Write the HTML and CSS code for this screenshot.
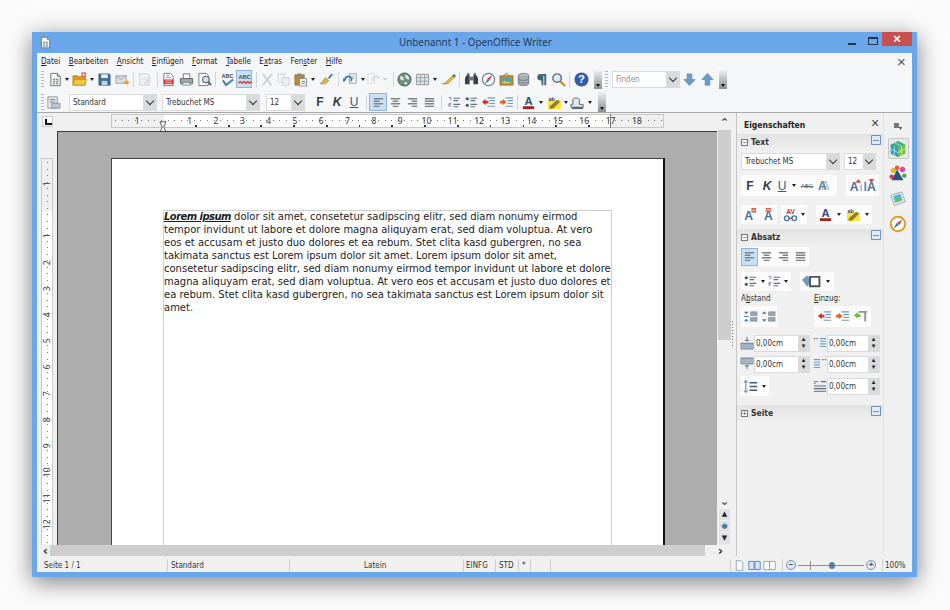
FILE: index.html
```html
<!DOCTYPE html>
<html lang="de">
<head>
<meta charset="utf-8">
<title>Unbenannt 1 - OpenOffice Writer</title>
<link rel="stylesheet" href="styles.css">
</head>
<body>
<svg class="defs" width="0" height="0">
  <symbol id="new" viewBox="0 0 16 16"><path d="M3 1.500h7l3 3v10H3z" fill="#fff" stroke="#6d6d6d"/><path d="M10 1.500v3h3" fill="#ddd" stroke="#6d6d6d"/><path d="M5 7h6v6H5z" fill="#7f93a5"/><path d="M5 9h6M5 11h6M8 7v6" stroke="#fff" stroke-width=".7"/></symbol>
  <symbol id="open" viewBox="0 0 16 16"><path d="M1 4h5l1 1h7v9H1z" fill="#d99a1d" stroke="#a8720f" stroke-width=".7"/><path d="M2.500 8h13l-2 6H1z" fill="#f6c544" stroke="#b98212" stroke-width=".6"/><path d="M10 0.500h5v5h-5z" fill="#e0503a"/><path d="M12.500 1v4M10.500 3h4" stroke="#fff" stroke-width=".8"/></symbol>
  <symbol id="save" viewBox="0 0 16 16"><path d="M2 2h11l1 1v11H2z" fill="#3d6f9c" stroke="#2a5075" stroke-width=".7"/><path d="M4.500 2.500h7v4h-7z" fill="#e9eef3"/><path d="M5 9.500h6V14H5z" fill="#c5d3df"/></symbol>
  <symbol id="mail" viewBox="0 0 16 16"><path d="M1 4h11v8H1z" fill="#dbe0e5" stroke="#8a929a" stroke-width=".8"/><path d="M1 4l5.500 4L12 4" fill="none" stroke="#8a929a" stroke-width=".8"/><path d="M9 10.500h3V8.500l3.500 2.800-3.500 2.700v-2H9z" fill="#e9962b"/></symbol>
  <symbol id="edit" viewBox="0 0 16 16"><path d="M3 2h8l2 2v10H3z" fill="#f6f6f6" stroke="#c4c8cc"/><path d="M5 6h6M5 8h5M5 10h4" stroke="#d5d8db"/><path d="M8 11l5-6 2 1.500-5 6-2.500 1z" fill="#d8dade"/></symbol>
  <symbol id="pdf" viewBox="0 0 16 16"><path d="M3 1.500h7l3 3v10H3z" fill="#fff" stroke="#777"/><path d="M3 8h10v5H3z" fill="#c9302c"/><path d="M4.500 9.500h7M4.500 11.500h7" stroke="#f3b4b1"/><path d="M5 4h4M5 6h6" stroke="#999"/></symbol>
  <symbol id="print" viewBox="0 0 16 16"><path d="M4.500 2h7v5h-7z" fill="#fff" stroke="#68707a"/><path d="M1.500 7h13v5.500h-13z" fill="#a2a8ae" stroke="#5f666d"/><path d="M4 11h8v3H4z" fill="#e8eaec" stroke="#5f666d" stroke-width=".7"/></symbol>
  <symbol id="preview" viewBox="0 0 16 16"><path d="M2 1.500h8l2 2v11H2z" fill="#fff" stroke="#777"/><circle cx="9.500" cy="8" r="3.500" fill="#cfe3f2" stroke="#59626b" stroke-width="1.200"/><path d="M12 10.500l3 3.500" stroke="#59626b" stroke-width="2"/></symbol>
  <symbol id="cut" viewBox="0 0 16 16"><path d="M3 2l9 12M13 2L3 14" stroke="#cfd2d5" stroke-width="2"/></symbol>
  <symbol id="copy" viewBox="0 0 16 16"><path d="M2 2h7v9H2z" fill="#f2f2f2" stroke="#d0d3d6"/><path d="M7 6h7v8H7z" fill="#eceff1" stroke="#cdd0d3"/></symbol>
  <symbol id="paste" viewBox="0 0 16 16"><path d="M2 3h10v11H2z" fill="#b98b3a" stroke="#8a6523" stroke-width=".7"/><path d="M5 1.500h4v3H5z" fill="#7d8a96"/><path d="M7 7h7.500v8H7z" fill="#fff" stroke="#68727c" stroke-width=".8"/><path d="M9 10h4M9 12h4" stroke="#4d7da8"/></symbol>
  <symbol id="brush" viewBox="0 0 16 16"><path d="M9.500 6l4-4.500 1.500 1.500-4 4.500z" fill="#4a7eb0"/><path d="M1 12c3 0 3-4 6-6l3.500 3c-2 3-6 5-9.500 3z" fill="#d9b45a" stroke="#8f7631" stroke-width=".6"/></symbol>
  <symbol id="undo" viewBox="0 0 16 16"><path d="M7 2h7v10H7z" fill="#fff" stroke="#8a98a5"/><path d="M9 5h3M9 7h3" stroke="#8a98a5"/><path d="M2 7c2-3 6-3 7 0v3" fill="none" stroke="#3f78ad" stroke-width="1.800"/><path d="M6 8l3 4 3-4" fill="#3f78ad" transform="translate(-8 -1)"/></symbol>
  <symbol id="redo" viewBox="0 0 16 16"><path d="M2 2h7v10H2z" fill="#f7f7f7" stroke="#d7dade"/><path d="M14 7c-2-3-6-3-7 0v3" fill="none" stroke="#d4d7da" stroke-width="1.800"/></symbol>
  <symbol id="globe" viewBox="0 0 16 16"><circle cx="8" cy="8" r="7" fill="#6e8f7a" stroke="#46604f"/><path d="M3 5c2-1 3 0 4 1s0 3-1 3-3-1-3-4zM9 3c2 0 4 2 4 4s-2 1-3 0-2-3-1-4zM8 11c2-1 3 0 3 1s-2 2-3 1z" fill="#dfe6df"/></symbol>
  <symbol id="table" viewBox="0 0 16 16"><path d="M1.500 2.500h13v11h-13z" fill="#dfe4e8" stroke="#8d969e"/><path d="M1.500 6h13M1.500 9.800h13M5.800 2.500v11M10.200 2.500v11" stroke="#8d969e" stroke-width=".8"/></symbol>
  <symbol id="draw" viewBox="0 0 16 16"><path d="M1 12c3 2 5-1 7-2" fill="none" stroke="#c79a2a" stroke-width="1.500"/><path d="M6 10l7-7 2 2-7 7-3 1z" fill="#e7b94b" stroke="#8a6a1c" stroke-width=".5"/><path d="M12 4l2-2 2 2-2 2z" fill="#4a7eb0"/></symbol>
  <symbol id="find" viewBox="0 0 16 16"><path d="M1 7l2-4h3v10H1zM15 7l-2-4h-3v10h5z" fill="#3a3f45"/><path d="M6 5h4v4H6z" fill="#6d7379"/><path d="M3.500 1h2v3h-2zM10.500 1h2v3h-2z" fill="#5d6369"/></symbol>
  <symbol id="nav" viewBox="0 0 16 16"><circle cx="8" cy="8" r="6.500" fill="#f4f6f7" stroke="#6f7f8e" stroke-width="1.300"/><path d="M12 3L7 7l2 2z" fill="#d23b3b"/><path d="M4 13l5-4-2-2z" fill="#4a7eb0"/></symbol>
  <symbol id="gallery" viewBox="0 0 16 16"><path d="M1 4h14v10H1z" fill="#c58a3a" stroke="#8b5f20" stroke-width=".7"/><path d="M5 4l3-3 3 3" fill="none" stroke="#8b5f20"/><path d="M3 6h10v6H3z" fill="#4fa3a5"/><path d="M3 12l3-3 2 2 2-1 3 2z" fill="#e8d35c"/></symbol>
  <symbol id="db" viewBox="0 0 16 16"><ellipse cx="8" cy="3.500" rx="5.500" ry="2" fill="#c4c9ce" stroke="#737b83"/><path d="M2.500 3.500v9c0 2.600 11 2.600 11 0v-9" fill="#a7aeb5" stroke="#737b83"/><path d="M2.500 7c0 2.600 11 2.600 11 0M2.500 10c0 2.600 11 2.600 11 0" fill="none" stroke="#737b83"/></symbol>
  <symbol id="para" viewBox="0 0 16 16"><path d="M13 2H7a3.500 3.500 0 0 0 0 7h1v5h2V4h1v10h2z" fill="#49607a"/></symbol>
  <symbol id="zoom" viewBox="0 0 16 16"><circle cx="6.500" cy="6.500" r="4.500" fill="#dde9f2" stroke="#596b7c" stroke-width="1.500"/><path d="M10 10l5 5" stroke="#c18d2a" stroke-width="2.400"/></symbol>
  <symbol id="down" viewBox="0 0 16 16"><path d="M5.500 2h5v6h3.500L8 14.500 2 8h3.500z" fill="#6f9bc4" stroke="#4f7aa3" stroke-width=".6"/></symbol>
  <symbol id="up" viewBox="0 0 16 16"><path d="M5.500 14h5V8h3.500L8 1.500 2 8h3.500z" fill="#6f9bc4" stroke="#4f7aa3" stroke-width=".6"/></symbol>
  <symbol id="styles" viewBox="0 0 16 16"><path d="M2 2h10v12H2z" fill="#e8ebee" stroke="#8a939b"/><path d="M4 5h6M4 7.500h6" stroke="#6f7981"/><path d="M6 9h9v5H6z" fill="#b7c5d2" stroke="#7c8b98" stroke-width=".7"/></symbol>
  <symbol id="al" viewBox="0 0 16 16"><path d="M3 4h10M3 6.700h6M3 9.400h10M3 12.100h6" class="ln"/></symbol>
  <symbol id="ac" viewBox="0 0 16 16"><path d="M3 4h10M5 6.700h6M3 9.400h10M5 12.100h6" class="ln"/></symbol>
  <symbol id="ar" viewBox="0 0 16 16"><path d="M3 4h10M7 6.700h6M3 9.400h10M7 12.100h6" class="ln"/></symbol>
  <symbol id="aj" viewBox="0 0 16 16"><path d="M3 4h10M3 6.700h10M3 9.400h10M3 12.100h10" class="ln"/></symbol>
  <symbol id="num" viewBox="0 0 16 16"><path d="M2 2.500h2v3M2 9h2v1H2v2h2" fill="none" stroke="#5e7f9f" stroke-width=".9"/><path d="M7 3.500h7M7 6h5M7 10h7M7 12.500h5" class="ln2"/></symbol>
  <symbol id="bul" viewBox="0 0 16 16"><circle cx="3.500" cy="4" r="1.700" fill="#3f5a75"/><circle cx="3.500" cy="11" r="1.700" fill="#3f5a75"/><path d="M7 3.500h7M7 6h5M7 10h7M7 12.500h5" class="ln2"/></symbol>
  <symbol id="indm" viewBox="0 0 16 16"><path d="M7 3h8M9 6h6M9 9h6M7 12h8" class="ln3"/><path d="M1 7.500l4-3.500v2h3v3H5v2z" fill="#c9372c"/></symbol>
  <symbol id="indp" viewBox="0 0 16 16"><path d="M7 3h8M9 6h6M9 9h6M7 12h8" class="ln3"/><path d="M8 7.500l-4-3.500v2H1v3h3v2z" fill="#d9662c"/></symbol>
  <symbol id="indg" viewBox="0 0 16 16"><path d="M6 3h9M13 3v10" stroke="#8b96a0" stroke-width="2" fill="none"/><path d="M1 6.500l4-3v2h3v3H5v2z" fill="#6eb83c"/></symbol>
  <symbol id="bg" viewBox="0 0 16 16"><path d="M3 10V5c0-2 6-3 7 0v5h4v3H1v-3z" fill="#e3e8ec" stroke="#58636d"/><path d="M2 13h12v2H2z" fill="#58636d"/></symbol>
  <symbol id="fill" viewBox="0 0 20 16"><path d="M1 6l5-4 5 5-5 6z" fill="#6f9bc4" stroke="#4f7aa3" stroke-width=".6"/><path d="M9 3h10v10H9z" fill="#fff" stroke="#4a5560" stroke-width="2"/></symbol>
  <symbol id="pinc" viewBox="0 0 16 16"><path d="M1 3l2.500 2.500L6 3z M1 13l2.500-2.500L6 13z" fill="#3f78ad"/><path d="M8 3h7v4H8zM8 9h7v4H8z" fill="#9ba8b4" stroke="#6d7b88" stroke-width=".6"/><path d="M1 8h5" stroke="#3f78ad"/></symbol>
  <symbol id="pdec" viewBox="0 0 16 16"><path d="M1 5l2.500-2.500L6 5z M1 11l2.500 2.500L6 11z" fill="#3f78ad"/><path d="M8 3h7v4H8zM8 9h7v4H8z" fill="#9ba8b4" stroke="#6d7b88" stroke-width=".6"/></symbol>
  <symbol id="sabove" viewBox="0 0 16 16"><path d="M8 1v5M5.500 5h5" stroke="#59636d"/><path d="M1 8h14v7H1z" fill="#8fa2b3" stroke="#627382" stroke-width=".6"/><path d="M1 10.500h14M1 13h14" stroke="#dbe2e8" stroke-width=".7"/></symbol>
  <symbol id="sbelow" viewBox="0 0 16 16"><path d="M1 1h14v7H1z" fill="#8fa2b3" stroke="#627382" stroke-width=".6"/><path d="M1 3.500h14M1 6h14" stroke="#dbe2e8" stroke-width=".7"/><path d="M8 9v5M5.500 10h5" stroke="#59636d"/></symbol>
  <symbol id="ibefore" viewBox="0 0 16 16"><path d="M8 3h7M8 6h7M8 9h7M8 12h7" class="ln3"/><path d="M1 3h1.500M4 3h1.500" stroke="#59636d" stroke-width="1.500"/></symbol>
  <symbol id="iafter" viewBox="0 0 16 16"><path d="M1 3h7M1 6h7M1 9h7M1 12h7" class="ln3"/><path d="M10.500 3H12M13.500 3H15" stroke="#59636d" stroke-width="1.500"/></symbol>
  <symbol id="lsp" viewBox="0 0 16 16"><path d="M3 2v12M1 4l2-2.500L5 4M1 12l2 2.500L5 12" fill="none" stroke="#3f78ad"/><path d="M7 4h8M7 8h8M7 12h8" stroke="#445a70" stroke-width="1.800"/></symbol>
  <symbol id="lgap" viewBox="0 0 16 16"><path d="M1 3h5M1 5h2" stroke="#59636d"/><path d="M9 3h6M1 8h14M1 11h14M1 14h14" stroke="#546b80" stroke-width="1.400"/></symbol>
  <symbol id="more" viewBox="0 0 10 10"><path d="M.5.500h9v9h-9z" fill="#dfe9f4" stroke="#6e93b8"/><path d="M2 5.500h6" stroke="#6e93b8"/></symbol>
  <symbol id="cube" viewBox="0 0 20 20"><path d="M2 5l8-4 8 4v10l-8 4-8-4z" fill="#3bb27c"/><path d="M2 5l8 4v10l-8-4z" fill="#2a9fc9"/><path d="M10 9l8-4v10l-8 4z" fill="#7ac143"/><path d="M6 3l8 4M2 10l8 4 8-4M6 7v10M14 7v10" stroke="#e9f5f0" stroke-width=".7" fill="none"/></symbol>
  <symbol id="tstyle" viewBox="0 0 20 20"><path d="M3 17L9 5l7 12z" fill="#2d4f86"/><circle cx="5" cy="6" r="3" fill="#e9b32c"/><circle cx="15" cy="5" r="3" fill="#d44ba0"/><circle cx="9" cy="3" r="2.500" fill="#e55b33"/><circle cx="17" cy="12" r="2.500" fill="#4bb043"/><circle cx="3" cy="13" r="2.500" fill="#d9364a"/></symbol>
  <symbol id="tgal" viewBox="0 0 20 20"><path d="M2 6l12-4 4 11-12 4z" fill="#f1f5f7" stroke="#8ea0ad"/><path d="M4.500 7l8-2.800 2.700 7.300-8 2.800z" fill="#55b4d6"/><path d="M6 13l3-5 2 3 2-2 2 2-8 3z" fill="#6dbb48"/></symbol>
  <symbol id="tnav" viewBox="0 0 20 20"><circle cx="10" cy="10" r="8" fill="#fff" stroke="#e29a24" stroke-width="2.200"/><path d="M15 5l-6 3.500 2.500 2.500z" fill="#d23b3b"/><path d="M5 15l6-4-2.500-2.500z" fill="#3f78ad"/></symbol>
  <symbol id="menuico" viewBox="0 0 10 10"><path d="M1 2h5v5H1z" fill="#777"/><path d="M6 6h3L7.500 9z" fill="#444"/></symbol>
  <symbol id="single" viewBox="0 0 16 16"><path d="M4 2h6l2 2v10H4z" fill="#fff" stroke="#8b97a3"/></symbol>
  <symbol id="dbl" viewBox="0 0 16 16"><path d="M1 3h6.500v10H1zM8.500 3H15v10H8.500z" fill="#dbe7f3" stroke="#3f78ad"/></symbol>
  <symbol id="book" viewBox="0 0 16 16"><path d="M1 3h7v10H1zM8 3h7v10H8z" fill="#fff" stroke="#8b97a3"/></symbol>
</svg>

<div class="win">
  <header class="title">
    <svg class="appico"><use href="#new"/></svg>
    <span class="title-text">Unbenannt 1 - OpenOffice Writer</span>
    <span class="wbtn min"></span>
    <span class="wbtn max"></span>
    <span class="wbtn close">×</span>
  </header>

  <nav class="menu">
    <span><u>D</u>atei</span><span><u>B</u>earbeiten</span><span><u>A</u>nsicht</span><span><u>E</u>infügen</span><span><u>F</u>ormat</span><span><u>T</u>abelle</span><span>E<u>x</u>tras</span><span>Fen<u>s</u>ter</span><span><u>H</u>ilfe</span>
    <span class="menu-x">×</span>
  </nav>

  <div class="tb t1">
    <i class="grip"></i>
    <b class="c w18"><svg><use href="#new"/></svg></b><b class="c w6 dd"></b>
    <b class="c w18"><svg><use href="#open"/></svg></b><b class="c w8 dd"></b>
    <b class="c w16"><svg><use href="#save"/></svg></b>
    <b class="c w20"><svg><use href="#mail"/></svg></b>
    <b class="c w2 sep"></b>
    <b class="c w20"><svg><use href="#edit"/></svg></b>
    <b class="c w6 sep"></b>
    <b class="c w16"><svg><use href="#pdf"/></svg></b>
    <b class="c w20"><svg><use href="#print"/></svg></b>
    <b class="c w16"><svg><use href="#preview"/></svg></b>
    <b class="c w6 sep"></b>
    <b class="c w18"><svg viewBox="0 0 16 16"><text x="8" y="6.500" class="tiny">ABC</text><path d="M3 9l3.500 5L14 8" fill="none" stroke="#4a7eb0" stroke-width="2.200"/></svg></b>
    <b class="c w16 on"><svg viewBox="0 0 16 16"><text x="8" y="7.500" class="tiny">ABC</text><path d="M1.500 12l2-2 2 2 2-2 2 2 2-2 2 2 2-2" fill="none" stroke="#d23b3b" stroke-width="1.400"/></svg></b>
    <b class="c w8 sep"></b>
    <b class="c w14"><svg><use href="#cut"/></svg></b>
    <b class="c w18"><svg><use href="#copy"/></svg></b>
    <b class="c w16"><svg><use href="#paste"/></svg></b><b class="c w10 dd"></b>
    <b class="c w16"><svg><use href="#brush"/></svg></b>
    <b class="c w8 sep"></b>
    <b class="c w16"><svg><use href="#undo"/></svg></b><b class="c w10 dd"></b>
    <b class="c w10"><svg><use href="#redo"/></svg></b><b class="c w14 dd off"></b>
    <b class="c w2 sep"></b>
    <b class="c w20"><svg><use href="#globe"/></svg></b>
    <b class="c w16"><svg><use href="#table"/></svg></b><b class="c w10 dd"></b>
    <b class="c w16"><svg><use href="#draw"/></svg></b>
    <b class="c w6 sep"></b>
    <b class="c w18"><svg><use href="#find"/></svg></b>
    <b class="c w16"><svg><use href="#nav"/></svg></b>
    <b class="c w20"><svg><use href="#gallery"/></svg></b>
    <b class="c w14"><svg><use href="#db"/></svg></b>
    <b class="c w22"><svg><use href="#para"/></svg></b>
    <b class="c w12"><svg><use href="#zoom"/></svg></b>
    <b class="c w10 sep"></b>
    <b class="c w14"><svg viewBox="0 0 16 16"><circle cx="8" cy="8" r="7.500" fill="#2f5da6"/><text x="8" y="12" class="q">?</text></svg></b>
    <i class="handle h-a"></i>
    <i class="grip g-b"></i>
    <span class="combo finden"><span class="combo-val">Finden</span><span class="combo-btn"></span></span>
    <b class="c w18"><svg><use href="#down"/></svg></b>
    <b class="c w18"><svg><use href="#up"/></svg></b>
    <i class="handle h-b"></i>
  </div>

  <div class="tb t2">
    <i class="grip"></i>
    <b class="c w14"><svg><use href="#styles"/></svg></b>
    <span class="combo c-style"><span class="combo-val">Standard</span><span class="combo-btn"></span></span>
    <span class="combo c-font"><span class="combo-val">Trebuchet MS</span><span class="combo-btn"></span></span>
    <span class="combo c-size"><span class="combo-val">12</span><span class="combo-btn"></span></span>
    <b class="c w18 fmt m-f">F</b>
    <b class="c w16 fmt it">K</b>
    <b class="c w18 fmt ul">U</b>
    <b class="c w6 sep"></b>
    <b class="c w18 on"><svg><use href="#al"/></svg></b>
    <b class="c w16"><svg><use href="#ac"/></svg></b>
    <b class="c w18"><svg><use href="#ar"/></svg></b>
    <b class="c w16"><svg><use href="#aj"/></svg></b>
    <b class="c w8 sep"></b>
    <b class="c w18"><svg><use href="#num"/></svg></b>
    <b class="c w16"><svg><use href="#bul"/></svg></b>
    <b class="c w18"><svg><use href="#indm"/></svg></b>
    <b class="c w18"><svg><use href="#indp"/></svg></b>
    <b class="c w4 sep"></b>
    <b class="c w18"><svg viewBox="0 0 16 16"><text x="8" y="11" class="fa">A</text><path d="M2 12h12v3H2z" fill="#a5221d"/></svg></b><b class="c w8 dd"></b>
    <b class="c w18"><svg viewBox="0 0 16 16"><path d="M1 6h14v9H1z" fill="#f5e83c"/><path d="M3 12l8-7 3 2-7 7-4 1z" fill="#9a7a2b"/><text x="5" y="6" class="tiny2">ab</text></svg></b><b class="c w6 dd"></b>
    <b class="c w16"><svg><use href="#bg"/></svg></b><b class="c w10 dd"></b>
    <i class="handle h-c"></i>
  </div>

  <main class="work">
    <section class="editor">
      <div class="corner"><span class="lbtn"></span></div>
      <div class="hruler">
        <div class="hr-track">
          <span class="hr-cell">1</span><span class="hr-cell"><svg class="hg" viewBox="0 0 10 16"><path d="M1 1h8L6 8l3 7H1l3-7z" fill="#fff" stroke="#555" stroke-width="1.300"/></svg></span><span class="hr-cell">1</span><span class="hr-cell">2</span><span class="hr-cell">3</span><span class="hr-cell">4</span><span class="hr-cell">5</span><span class="hr-cell">6</span><span class="hr-cell">7</span><span class="hr-cell">8</span><span class="hr-cell">9</span><span class="hr-cell">10</span><span class="hr-cell">11</span><span class="hr-cell">12</span><span class="hr-cell">13</span><span class="hr-cell">14</span><span class="hr-cell">15</span><span class="hr-cell">16</span><span class="hr-cell rm">17</span><span class="hr-cell">18</span>
        </div>
      </div>
      <div class="vscroll">
        <span class="arr">⌃</span>
        <span class="vthumb"></span>
        <span class="vtrack"></span>
        <span class="arr dn">⌄</span>
        <span class="navb">▲</span><span class="navb ball">●</span><span class="navb">▼</span>
      </div>
      <div class="vruler">
        <div class="vr-track">
          <span class="vr-cell">1</span><span class="vr-cell vr-blank"></span><span class="vr-cell">1</span><span class="vr-cell">2</span><span class="vr-cell">3</span><span class="vr-cell">4</span><span class="vr-cell">5</span><span class="vr-cell">6</span><span class="vr-cell">7</span><span class="vr-cell">8</span><span class="vr-cell">9</span><span class="vr-cell">10</span><span class="vr-cell">11</span><span class="vr-cell">12</span>
        </div>
      </div>
      <div class="doc">
        <div class="page">
          <div class="frame">
            <p><strong>Lorem ipsum</strong> dolor sit amet, consetetur sadipscing elitr, sed diam nonumy eirmod<br>tempor invidunt ut labore et dolore magna aliquyam erat, sed diam voluptua. At vero<br>eos et accusam et justo duo dolores et ea rebum. Stet clita kasd gubergren, no sea<br>takimata sanctus est Lorem ipsum dolor sit amet. Lorem ipsum dolor sit amet,<br>consetetur sadipscing elitr, sed diam nonumy eirmod tempor invidunt ut labore et dolore<br>magna aliquyam erat, sed diam voluptua. At vero eos et accusam et justo duo dolores et<br>ea rebum. Stet clita kasd gubergren, no sea takimata sanctus est Lorem ipsum dolor sit<br>amet.</p>
          </div>
        </div>
      </div>
      <div class="hscroll"><span class="harr">‹</span><span class="hthumb"></span><span class="harr r">›</span></div>
    </section>

    <div class="split"><i></i></div>

    <aside class="deck">
      <div class="deck-title"><span>Eigenschaften</span><span class="deck-x">×</span></div>

      <div class="ph"><i class="exp">−</i><span>Text</span><svg class="more"><use href="#more"/></svg></div>
      <div class="row r-font">
        <span class="combo c-sfont"><span class="combo-val">Trebuchet MS</span><span class="combo-btn"></span></span>
        <span class="combo c-ssize"><span class="combo-val">12</span><span class="combo-btn"></span></span>
      </div>
      <div class="row r-a">
        <span class="grp g1">
          <b class="c w18 fmt">F</b><b class="c w16 fmt it">K</b><b class="c w14 fmt ul">U</b><b class="c w10 dd"></b>
          <b class="c w16 strike">ABC</b><b class="c w18 fmt shadow">A</b>
        </span>
        <span class="grp g2">
          <b class="c w16"><svg viewBox="0 0 16 16"><text x="6.500" y="14" class="fb">A</text><path d="M8 5h6l-3-4z" fill="#d04c3a"/><path d="M14 7v7" stroke="#6f8aa6"/></svg></b>
          <b class="c w14"><svg viewBox="0 0 16 16"><text x="9" y="14" class="fb">A</text><path d="M6 1h6L9 5z" fill="#d04c3a"/><path d="M2.500 4v10" stroke="#6f8aa6" stroke-width="2"/></svg></b>
        </span>
      </div>
      <div class="row r-b">
        <span class="grp">
          <b class="c w18"><svg viewBox="0 0 16 16"><text x="6" y="14" class="fb">A</text><path d="M9 1h5v5H9z" fill="#d4604e"/><path d="M10 3.500h3" stroke="#fff"/></svg></b>
          <b class="c w18"><svg viewBox="0 0 16 16"><text x="8" y="14" class="fb">A</text><path d="M5 1h6v4H5z" fill="#d4604e"/><path d="M6 3h4" stroke="#fff"/></svg></b>
        </span>
        <span class="grp g3"><b class="c w18"><svg viewBox="0 0 16 16"><text x="8" y="7" class="tiny3">AV</text><circle cx="4" cy="12" r="2.500" fill="none" stroke="#3f78ad" stroke-width="1.500"/><circle cx="12" cy="12" r="2.500" fill="none" stroke="#3f78ad" stroke-width="1.500"/><path d="M6 12h4" stroke="#d23b3b" stroke-width="1.500"/></svg></b><b class="c w8 dd"></b></span>
        <span class="grp g4"><b class="c w18"><svg viewBox="0 0 16 16"><text x="8" y="11" class="fa">A</text><path d="M2 12h12v3H2z" fill="#a5221d"/></svg></b><b class="c w10 dd"></b></span>
        <span class="grp"><b class="c w18"><svg viewBox="0 0 16 16"><path d="M1 6h14v9H1z" fill="#f5e83c"/><path d="M3 12l8-7 3 2-7 7-4 1z" fill="#9a7a2b"/><text x="5" y="6" class="tiny2">ab</text></svg></b><b class="c w10 dd"></b></span>
      </div>

      <div class="ph ph2"><i class="exp">−</i><span>Absatz</span><svg class="more"><use href="#more"/></svg></div>
      <div class="row r-c">
        <span class="grp"><b class="c w17 on"><svg><use href="#al"/></svg></b><b class="c w17"><svg><use href="#ac"/></svg></b><b class="c w17"><svg><use href="#ar"/></svg></b><b class="c w17"><svg><use href="#aj"/></svg></b></span>
      </div>
      <div class="row r-d">
        <span class="grp"><b class="c w18"><svg><use href="#bul"/></svg></b><b class="c w8 dd"></b><b class="c w14"><svg><use href="#num"/></svg></b><b class="c w10 dd"></b></span>
        <span class="grp g5"><b class="c w22 wide"><svg><use href="#fill"/></svg></b><b class="c w12 dd"></b></span>
      </div>
      <div class="row r-e"><span class="lbl l1">A<u>b</u>stand</span><span class="lbl"><u>E</u>inzug:</span></div>
      <div class="row r-f">
        <span class="grp"><b class="c w18"><svg><use href="#pinc"/></svg></b><b class="c w18"><svg><use href="#pdec"/></svg></b></span>
        <span class="grp g6"><b class="c w18"><svg><use href="#indm"/></svg></b><b class="c w18"><svg><use href="#indp"/></svg></b><b class="c w18"><svg><use href="#indg"/></svg></b></span>
      </div>
      <div class="row r-s">
        <svg class="sico"><use href="#sabove"/></svg><span class="spin s-a"><span class="spin-val">0,00cm</span><span class="spin-btn"><i>▴</i><i>▾</i></span></span>
        <svg class="sico si2"><use href="#ibefore"/></svg><span class="spin s-b"><span class="spin-val">0,00cm</span><span class="spin-btn"><i>▴</i><i>▾</i></span></span>
      </div>
      <div class="row r-s">
        <svg class="sico"><use href="#sbelow"/></svg><span class="spin s-a"><span class="spin-val">0,00cm</span><span class="spin-btn"><i>▴</i><i>▾</i></span></span>
        <svg class="sico si2"><use href="#iafter"/></svg><span class="spin s-b"><span class="spin-val">0,00cm</span><span class="spin-btn"><i>▴</i><i>▾</i></span></span>
      </div>
      <div class="row r-s r-l">
        <span class="grp g7"><b class="c w18"><svg><use href="#lsp"/></svg></b><b class="c w10 dd"></b></span>
        <svg class="sico si3"><use href="#lgap"/></svg><span class="spin s-b"><span class="spin-val">0,00cm</span><span class="spin-btn"><i>▴</i><i>▾</i></span></span>
      </div>

      <div class="ph ph3"><i class="exp">+</i><span>Seite</span><svg class="more"><use href="#more"/></svg></div>
    </aside>

    <div class="tabs">
      <svg class="tab-menu"><use href="#menuico"/></svg>
      <span class="tab active"><svg><use href="#cube"/></svg></span>
      <span class="tab"><svg><use href="#tstyle"/></svg></span>
      <span class="tab"><svg><use href="#tgal"/></svg></span>
      <span class="tab"><svg><use href="#tnav"/></svg></span>
    </div>
  </main>

  <footer class="status">
    <span class="st s1">Seite 1 / 1</span>
    <span class="st s2">Standard</span>
    <span class="st s3">Latein</span>
    <span class="st s4">EINFG</span>
    <span class="st s5">STD</span>
    <span class="st s6">*</span>
    <span class="st s7"></span>
    <span class="st s8"></span>
    <span class="st s9"><svg><use href="#single"/></svg><svg><use href="#dbl"/></svg><svg><use href="#book"/></svg></span>
    <span class="st s10"><i class="zbtn">−</i><span class="slider"><i class="mid"></i><i class="thumb"></i></span><i class="zbtn">+</i></span>
    <span class="st s11">100%</span>
  </footer>
</div>
</body>
</html>
```

FILE: styles.css
```css
* { box-sizing: border-box; }
html, body { margin: 0; height: 610px; overflow: hidden; }
body { background: #fbfbfb; font-family: "DejaVu Sans Condensed", "DejaVu Sans", sans-serif; font-stretch: condensed; color: #2b2b2b; }
.defs { position: absolute; }
i, b { font-style: normal; font-weight: normal; }

.tiny { font: bold 6px "Liberation Sans", sans-serif; text-anchor: middle; fill: #3a4a5a; }
.tiny2 { font: bold 6px "Liberation Sans", sans-serif; text-anchor: middle; fill: #444; }
.tiny3 { font: bold 7px "Liberation Sans", sans-serif; text-anchor: middle; fill: #b23a3a; }
.q { font: bold 12px "Liberation Sans", sans-serif; text-anchor: middle; fill: #fff; }
.fa { font: bold 12px "Liberation Sans", sans-serif; text-anchor: middle; fill: #2f4f74; }
.fb { font: bold 13px "Liberation Sans", sans-serif; text-anchor: middle; fill: #4f6e8e; }
.ln { stroke: #7c838a; stroke-width: 1.500; fill: none; }
.ln2 { stroke: #5d7184; stroke-width: 1.200; fill: none; }
.ln3 { stroke: #6f9bc4; stroke-width: 1.200; fill: none; }

.win {
  margin: 32px 33px 0 32px;
  width: 885px;
  height: 545px;
  border: 5px solid #6aa6ea;
  border-width: 0 5px 5px;
  background: #f0f0f0;
  box-shadow: 0 5px 22px rgba(0, 0, 0, .5);
  display: flex;
  flex-direction: column;
}

.title {
  height: 21px;
  margin: 0 -5px;
  padding-left: 7px;
  background: #6aa6ea;
  display: flex;
  align-items: center;
  position: relative;
}
.appico { width: 13px; height: 13px; }
.title-text {
  position: absolute;
  left: 367px;
  top: 3px;
  font: 9.850px/15px "Noto Sans", sans-serif;
  color: #1e3a5c;
}
.wbtn { position: absolute; top: 0; }
.min { left: 816px; top: 11px; width: 8px; height: 2px; background: #24364c; }
.max { left: 836px; top: 5px; width: 10px; height: 8px; border: 1px solid #24364c; border-top-width: 2px; }
.close { left: 850px; width: 30px; height: 14px; background: #c75050; color: #fff; font: bold 13px/14px "Liberation Sans", sans-serif; text-align: center; }

.menu {
  height: 17px;
  display: flex;
  align-items: center;
  gap: 8.500px;
  padding: 0 0 0 4px;
  background: #f5f6f7;
  font-size: 8px;
  color: #222;
  position: relative;
}
.menu-x { margin-left: auto; margin-right: 3px; font: 15px/15px "Liberation Sans", sans-serif; color: #555; width: 12px; }

.tb { display: flex; align-items: center; background: #f5f6f7; position: relative; }
.t1 { height: 22px; padding: 0 0 4px 4px; }
.t2 { height: 21px; padding-left: 4px; border-bottom: 1px solid #a9a9a9; }

.c { height: 18px; flex: none; display: flex; align-items: center; justify-content: center; position: relative; }
.c svg { width: 15px; height: 15px; flex: none; }
.c.wide svg { width: 20px; }
.w2 { width: 2px; } .w4 { width: 4px; } .w6 { width: 6px; } .w8 { width: 8px; } .w10 { width: 10px; }
.w12 { width: 12px; } .w14 { width: 14px; } .w16 { width: 16px; } .w17 { width: 17px; } .w18 { width: 18px; }
.w20 { width: 20px; } .w22 { width: 22px; }
.on { background: #c9dff3; box-shadow: inset 0 0 0 1px #8db4da; }
.sep::after { content: ""; width: 1px; height: 15px; background: #d2d4d6; }
.dd::after { content: ""; border: 2.500px solid transparent; border-top: 3px solid #222; border-bottom: 0; }
.dd.off::after { border-top-color: #c4c6c8; }
.grip { width: 3px; height: 16px; flex: none; margin-right: 2px; background: repeating-linear-gradient(#b4b6b8 0 1px, transparent 1px 3px); }
.handle {
  width: 8px; height: 19px; flex: none; position: relative;
  background: linear-gradient(#f0f1f2, #8c8e90);
}
.handle::after { content: ""; position: absolute; left: 2px; bottom: 2px; border: 2px solid transparent; border-top: 3px solid #111; border-bottom: 0; }
.h-a { margin-left: 6px; }
.g-b { margin-left: 3px; margin-right: 4px; }
.h-b { margin-left: 3px; }
.h-c { margin-left: 3px; height: 20px; }

.combo { display: flex; flex: none; height: 17px; background: #d9dadb; padding: 1px; font-size: 8px; color: #333; }
.combo-val { flex: 1; min-width: 0; background: #fff; padding-left: 3px; line-height: 15px; white-space: nowrap; }
.combo-btn { width: 13px; flex: none; display: flex; align-items: center; justify-content: center; }
.combo-btn::after { content: ""; width: 5px; height: 5px; margin-top: -3px; border: solid #333; border-width: 0 1.300px 1.300px 0; transform: rotate(45deg); }
.finden { width: 68px; }
.finden .combo-val { color: #8a8a8a; }
.c-style { width: 88px; margin-left: 9px; }
.c-font { width: 98px; margin-left: 5px; }
.c-size { width: 39px; margin-left: 6px; }
.m-f { margin-left: 6px; }
.fmt { font: bold 12px/18px "Liberation Sans", sans-serif; color: #2d3b4a; }
.it { font-style: italic; }
.ul { text-decoration: underline; font-weight: normal; color: #3a5778; }
.strike { font: 6px/18px "Liberation Sans", sans-serif; color: #5d6b78; text-decoration: line-through; }
.shadow { color: #5f7f9f; text-shadow: 3px 0 #b4c5d6; justify-content: flex-start; padding-left: 3px; }

.work { flex: 1; min-height: 0; display: flex; background: #f0f0f0; }
.editor {
  width: 694px;
  flex: none;
  display: grid;
  grid-template-columns: 20px 660px 14px;
  grid-template-rows: 18px 414px 10px;
}
.corner { padding: 3px 0 0 5px; }
.lbtn { display: block; width: 11px; height: 11px; background: #fff; border: 1px solid #c8c8c8; position: relative; }
.lbtn::after { content: ""; position: absolute; left: 2px; top: 2px; width: 5px; height: 4px; border: solid #111; border-width: 0 0 2px 2px; }

.hruler { padding: 1px 0 0 54px; background: #f0f0f0; overflow: hidden; }
.hr-track {
  width: 553px;
  height: 14px;
  border: 1px solid #c8c8c8;
  padding-left: 12px;
  display: flex;
  align-items: center;
  font: 8.500px/12px "Noto Sans", sans-serif;
  color: #333;
  background:
    repeating-linear-gradient(90deg, transparent 0 3px, #777 3px 4px, transparent 4px 6.575px) 0 5px / 100% 1px no-repeat,
    repeating-linear-gradient(90deg, transparent 0 31px, #333 31px 32.750px) 52px 10px / 450px 2px no-repeat,
    linear-gradient(90deg, #efefef 0 52px, #fff 52px 500px, #efefef 500px);
}
.hr-cell { width: 26.300px; flex: none; text-align: center; position: relative; }
.hg { position: absolute; left: 9px; top: 0; width: 8px; height: 12px; }
.rm::after { content: ""; position: absolute; left: 13px; top: -1px; width: 1px; height: 14px; background: #777; }

.vscroll { grid-row: 1 / span 2; grid-column: 3; display: flex; flex-direction: column; align-items: stretch; padding-left: 1px; }
.arr { height: 17px; flex: none; text-align: center; font: 12px/20px "DejaVu Sans", sans-serif; color: #444; }
.arr.dn { height: 10px; line-height: 4px; }
.vthumb { height: 210px; flex: none; background: #cdcdcd; }
.vtrack { flex: 1; }
.navb { height: 11px; flex: none; margin: 0 1px 1px; background: #dfe1e3; font: 7px/11px "DejaVu Sans", sans-serif; text-align: center; color: #222; }
.ball { color: #4f7aa3; }

.vruler { padding: 27px 0 0 4px; overflow: hidden; }
.vr-track {
  width: 12px;
  height: 400px;
  border: 1px solid #c8c8c8;
  border-bottom: 0;
  background:
    repeating-linear-gradient(transparent 0 3px, #777 3px 4px, transparent 4px 6.550px) 5px 0 / 1px 100% no-repeat,
    linear-gradient(#efefef 0 52px, #fff 52px);
  padding-top: 12px;
  display: flex;
  flex-direction: column;
  font: 8.500px/10px "Noto Sans", sans-serif;
  color: #333;
}
.vr-cell { height: 26.200px; flex: none; display: flex; align-items: center; justify-content: center; writing-mode: vertical-rl; transform: rotate(180deg); }

.doc { background: #adadad; border: solid #3a3a3a; border-width: 1px 0 0 1px; overflow: hidden; padding: 26px 0 0 53px; }
.page { width: 554px; height: 400px; background: #fff; border: solid #444; border-right: 2px solid #111; border-width: 1px 2px 0 1px; padding: 51px 0 0 51px; }
.frame { width: 449px; height: 400px; border: 1px solid #cfcfcf; border-bottom: 0; }
.frame p { margin: 0; font: 10px/12.950px "DejaVu Sans", sans-serif; font-stretch: normal; color: #1c1c1c; white-space: nowrap; }
.frame strong { font-weight: bold; font-style: italic; text-decoration: underline; letter-spacing: -.55px; }

.hscroll { grid-column: 1 / span 3; height: 11px; display: flex; background: #f0f0f0; align-items: center; padding-left: 4px; }
.harr { width: 9px; flex: none; font: bold 13px/11px "DejaVu Sans", sans-serif; color: #333; text-align: center; }
.hthumb { width: 655px; height: 11px; flex: none; background: #cdcdcd; }
.harr.r { margin-left: 11px; }

.split { width: 6px; flex: none; position: relative; border-right: 1px solid #c6c6c6; }
.split i { position: absolute; left: 1px; top: 208px; width: 1px; height: 26px; background: repeating-linear-gradient(#666 0 1px, transparent 1px 3px); }

.deck { width: 147px; flex: none; border-right: 1px solid #e2e2e2; display: flex; flex-direction: column; font-size: 8px; }
.deck-title { height: 21px; padding: 5px 0 0 7px; display: flex; font-weight: bold; font-size: 8.500px; line-height: 14px; color: #222; }
.deck-x { margin-left: auto; margin-right: 2px; font: 14px/10px "Liberation Sans", sans-serif; color: #444; width: 10px; }
.ph { height: 16px; display: flex; align-items: center; gap: 3px; padding-left: 4px; background: linear-gradient(#e2e2e2, #efefef); font-weight: bold; font-size: 8.500px; color: #333; flex: none; }
.exp { width: 7px; height: 7px; border: 1px solid #777; font: 7px/5px "Liberation Sans", sans-serif; text-align: center; background: #f6f6f6; }
.more { width: 10px; height: 10px; margin-left: auto; margin-right: 2px; margin-top: -4px; }
.row { display: flex; flex: none; align-items: flex-start; padding-left: 4px; }
.grp { display: inline-flex; align-items: center; background: #fbfbfb; flex: none; height: 100%; }
.r-font { margin-top: 3px; height: 17px; }
.c-sfont { width: 99px; }
.c-ssize { width: 32px; margin-left: 4px; }
.c-ssize .combo-btn { width: 12px; }
.r-a { margin-top: 5px; height: 21px; }
.g1 { width: 96px; padding-left: 0; }
.g2 { margin-left: 9px; width: 33px; padding-left: 1px; }
.r-b { margin-top: 9px; height: 19px; }
.g3 { margin-left: 4px; }
.g4 { margin-left: 9px; }
.ph2 { margin-top: 5px; }
.r-c { margin-top: 2px; height: 19px; }
.r-d { margin-top: 6px; height: 19px; }
.g5 { margin-left: 9px; }
.r-e { margin-top: 1px; height: 14px; line-height: 14px; color: #333; }
.lbl { width: 73px; flex: none; }
.r-f { height: 21px; margin-top: 0; }
.g6 { margin-left: 37px; width: 57px; padding-left: 1px; }
.r-s { margin-top: 8px; height: 16px; align-items: center; padding-left: 1px; }
.r-s + .r-s { margin-top: 5px; }
.r-s + .r-s.r-l { margin-top: 6px; padding-left: 4px; }
.sico { width: 14px; height: 14px; flex: none; margin-left: 2px; }
.si2 { margin-left: 3px; }
.si3 { margin-left: 44px; }
.g7 { height: 20px; }
.spin { display: flex; height: 17px; flex: none; background: #d9dadb; padding: 1px; color: #333; }
.spin-val { flex: 1; background: #fff; line-height: 15px; padding-left: 1px; }
.spin-btn { width: 11px; display: flex; flex-direction: column; }
.spin-btn i { flex: 1; font: 7px/7px "DejaVu Sans", sans-serif; text-align: center; color: #222; }
.s-a { width: 56px; }
.s-b { width: 53px; }
.ph3 { margin-top: 11px; }

.tabs { flex: 1; display: flex; flex-direction: column; align-items: center; padding-top: 8px; background: #f0f0f0; }
.tab-menu { width: 10px; height: 10px; flex: none; margin-bottom: 7px; }
.tab { width: 21px; height: 21px; display: flex; align-items: center; justify-content: center; margin-bottom: 4px; flex: none; }
.tab svg { width: 18px; height: 18px; }
.tab.active { background: #e8e8e8; border: 1px solid #c6c6c6; border-radius: 2px; }

.status { height: 16px; flex: none; display: flex; align-items: center; padding-top: 2px; font-size: 8px; color: #333; background: #f0f0f0; }
.st { height: 13px; line-height: 13px; flex: none; border-left: 1px solid #cfcfcf; padding-left: 3px; display: flex; align-items: center; }
.s1 { width: 130px; border: 0; padding-left: 7px; }
.s2 { width: 122px; }
.s3 { width: 174px; padding-left: 74px; }
.s4 { width: 32px; padding-left: 2px; }
.s5 { width: 23px; }
.s6 { width: 12px; }
.s7 { width: 20px; }
.s8 { width: 180px; }
.s9 { width: 52px; padding-left: 1px; }
.s9 svg { width: 15px; height: 13px; flex: none; }
.s10 { width: 100px; gap: 2px; padding-left: 3px; }
.zbtn { width: 10px; height: 10px; flex: none; border-radius: 50%; border: 1px solid #7d93a8; background: #dfe8f0; font: bold 8px/8px "Liberation Sans", sans-serif; text-align: center; color: #446; }
.slider { width: 66px; height: 9px; flex: none; position: relative; background: linear-gradient(#8c8c8c, #8c8c8c) 0 4px / 100% 1px no-repeat; }
.mid { position: absolute; left: 12px; top: 0; width: 1px; height: 9px; background: #8c8c8c; }
.thumb { position: absolute; left: 31px; top: 1px; width: 6px; height: 7px; border-radius: 50%; background: #5b7fa3; }
.s11 { flex: 1; padding-left: 2px; }
```
